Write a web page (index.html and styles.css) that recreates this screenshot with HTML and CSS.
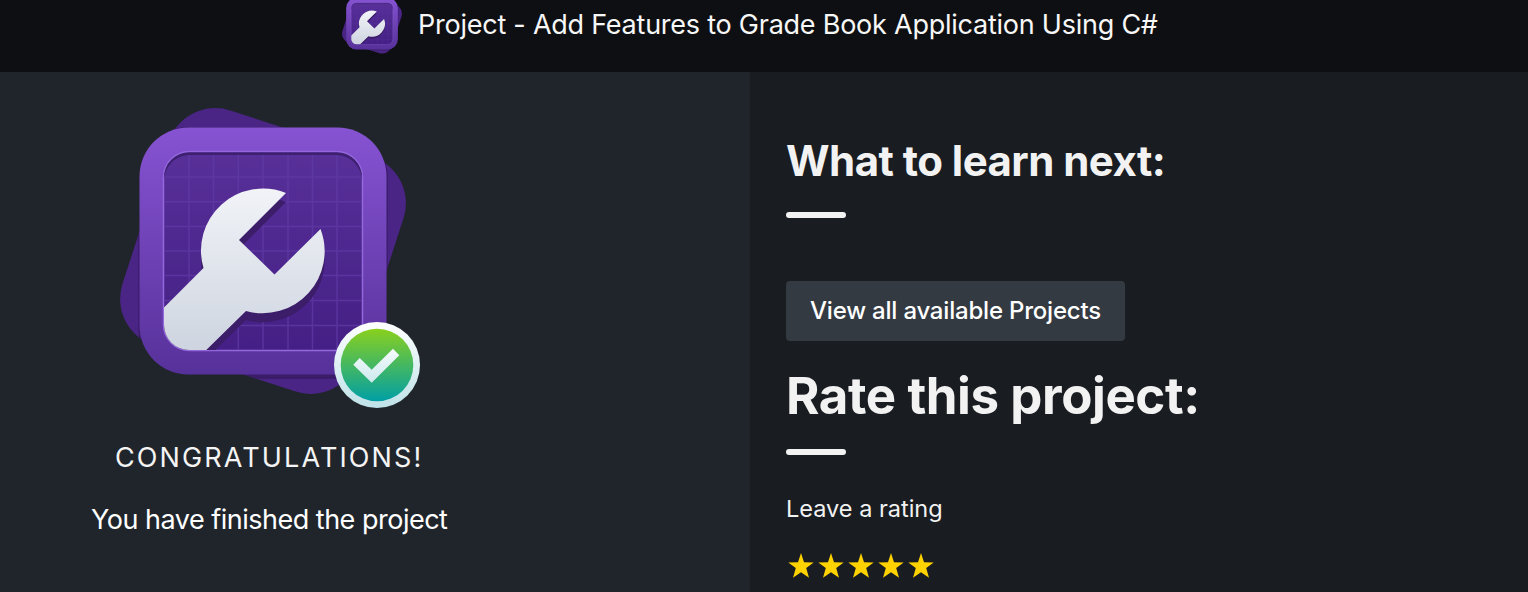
FILE: index.html
```html
<!DOCTYPE html>
<html lang="en">
<head>
<meta charset="utf-8">
<title>Project - Add Features to Grade Book Application Using C#</title>
<link rel="stylesheet" href="styles.css">
</head>
<body>
<header class="topbar">
  <svg class="topbar-icon" viewBox="120 138 286 258" aria-hidden="true"><use href="#project-badge"/></svg>
  <h1 class="topbar-title"><span>Project - Add Features to Grade Book Application Using C#</span></h1>
</header>
<main class="content">
  <section class="summary">
    <svg class="badge" viewBox="116 104 308 308" aria-hidden="true">
      <defs>
        <linearGradient id="frame" x2="0" y2="1"><stop offset="0" stop-color="#8653d2"/><stop offset="1" stop-color="#57319a"/></linearGradient>
        <linearGradient id="panel" x2="0" y2="1"><stop offset="0" stop-color="#583199"/><stop offset="1" stop-color="#452085"/></linearGradient>
        <linearGradient id="steel" x2="0" y2="1"><stop offset="0" stop-color="#f1f3f7"/><stop offset="1" stop-color="#cbd2de"/></linearGradient>
        <linearGradient id="ring" x2="0" y2="1"><stop offset="0" stop-color="#ffffff"/><stop offset="1" stop-color="#bfe2e8"/></linearGradient>
        <linearGradient id="disc" x2="0" y2="1"><stop offset="0" stop-color="#8ad01d"/><stop offset="1" stop-color="#009fa5"/></linearGradient>
        <linearGradient id="tick" x2="0" y2="1"><stop offset="0" stop-color="#f7fcfd"/><stop offset="1" stop-color="#cce8ed"/></linearGradient>
        <clipPath id="inside"><rect x="164" y="152.500" width="198" height="197.500" rx="25"/></clipPath>
        <clipPath id="backing"><rect x="139.500" y="127.500" width="247" height="247" rx="49" transform="rotate(18 263 251)"/></clipPath>
        <path id="wrench" d="M286 193A62 62 0 0 0 203.500 268L150 321.500V364H192L246 311A62 62 0 0 0 320.500 229L274.500 274.500L239 240Z"/>
        <g id="project-badge">
          <rect x="139.500" y="127.500" width="247" height="247" rx="49" fill="#4a2585" transform="rotate(18 263 251)"/>
          <g clip-path="url(#backing)"><rect x="138.300" y="127" width="249.400" height="252" rx="50" fill="#3a1c69"/></g>
          <rect x="139.500" y="127.500" width="247" height="247" rx="49" fill="url(#frame)"/>
          <rect x="163.500" y="151.500" width="199" height="199" rx="26" fill="url(#panel)" stroke="#9467dc" stroke-width="1.500"/>
          <g clip-path="url(#inside)">
            <path d="M189 152v198M213.500 152v198M238.300 152v198M263 152v198M288 152v198M312.500 152v198M337 152v198M164 177h198M164 201.700h198M164 226.500h198M164 251h198M164 275.500h198M164 300.500h198M164 325.500h198" stroke="#623ca7" stroke-width="1.500" opacity=".7"/>
            <path fill-rule="evenodd" d="M160 148H366V182H362A26 26 0 0 0 336 155H190A26 26 0 0 0 164 182H160Z" fill="#3d2070"/>
            <use href="#wrench" y="9" fill="#3c1d69"/>
            <use href="#wrench" fill="url(#steel)"/>
          </g>
        </g>
      </defs>
      <use href="#project-badge"/>
      <circle cx="377" cy="365" r="43" fill="url(#ring)"/>
      <circle cx="377" cy="365" r="36.300" fill="url(#disc)"/>
      <path d="M353.300 364.700L359.700 358L371.700 369.700L393 348.700L399.300 355.300L371.700 382.700Z" fill="url(#tick)"/>
    </svg>
    <h2 class="congrats"><span>CONGRATULATIONS!</span></h2>
    <p class="finished"><span>You have finished the project</span></p>
  </section>
  <section class="next">
    <h2 class="next-title"><span>What to learn next:</span></h2>
    <div class="rule"></div>
    <a class="button"><span>View all available Projects</span></a>
    <h2 class="rate-title"><span>Rate this project:</span></h2>
    <div class="rule rate-rule"></div>
    <p class="rating-label"><span>Leave a rating</span></p>
    <svg class="stars" viewBox="0 0 150 28" aria-label="Five stars">
      <defs><path id="star" d="M15 1L18 10.200L27.700 10.400L20.200 16.100L23 25.800L15 20.200L7 25.800L9.800 16.100L2.300 10.400L12 10.200Z"/></defs>
      <g fill="#ffd200"><use href="#star"/><use href="#star" x="30"/><use href="#star" x="60"/><use href="#star" x="90"/><use href="#star" x="120"/></g>
    </svg>
  </section>
</main>
</body>
</html>
```
FILE: styles.css
```css
* { box-sizing: border-box; }
body { margin: 0; height: 592px; overflow: hidden; background: #191c20; color: #fff; font-family: Inter, "Liberation Sans", sans-serif; }
h1, h2, p { margin: 0; font-weight: 400; white-space: nowrap; }
.topbar { display: flex; align-items: flex-start; height: 72px; padding-left: 342px; background: #0e0f12; }
.topbar-icon { flex: none; width: 60px; height: 54px; }
.topbar-title { margin-left: 16px; font-size: 27px; line-height: 50px; letter-spacing: -0.24px; color: #f7f7f7; }
.content { display: grid; grid-template-columns: 750px 1fr; height: 520px; }
.summary { display: flex; flex-direction: column; align-items: flex-start; padding-top: 32px; background: #20252c; }
.badge { width: 308px; height: 308px; margin-left: 116px; }
.congrats { margin: 26px 0 0 115px; font-size: 27px; line-height: 40px; letter-spacing: 2.12px; color: #f4f4f4; }
.finished { margin: 22px 0 0 91px; font-size: 27px; line-height: 40px; letter-spacing: -0.5px; }
.next { display: flex; flex-direction: column; align-items: flex-start; padding: 59px 0 0 36px; background: #191c20; color: #f2f2f2; }
.next-title { font-size: 42px; font-weight: 700; line-height: 60px; letter-spacing: -0.54px; }
.rule { flex: none; width: 60px; height: 6px; margin-top: 21px; border-radius: 3px; background: #f2f2f2; }
.button { display: flex; align-items: center; width: 339px; height: 60px; margin-top: 63px; padding: 0 0 2px 24px; border-radius: 4px; background: #343a42; color: #fff; font-size: 24px; font-weight: 500; letter-spacing: -0.2px; white-space: nowrap; }
.rate-title { margin-top: 20px; font-size: 51px; font-weight: 700; line-height: 70px; letter-spacing: -0.42px; }
.rate-rule { margin-top: 18px; }
.rating-label { margin-top: 34px; font-size: 23.5px; line-height: 40px; }
.stars { flex: none; width: 150px; height: 28px; margin-top: 23px; }
```
